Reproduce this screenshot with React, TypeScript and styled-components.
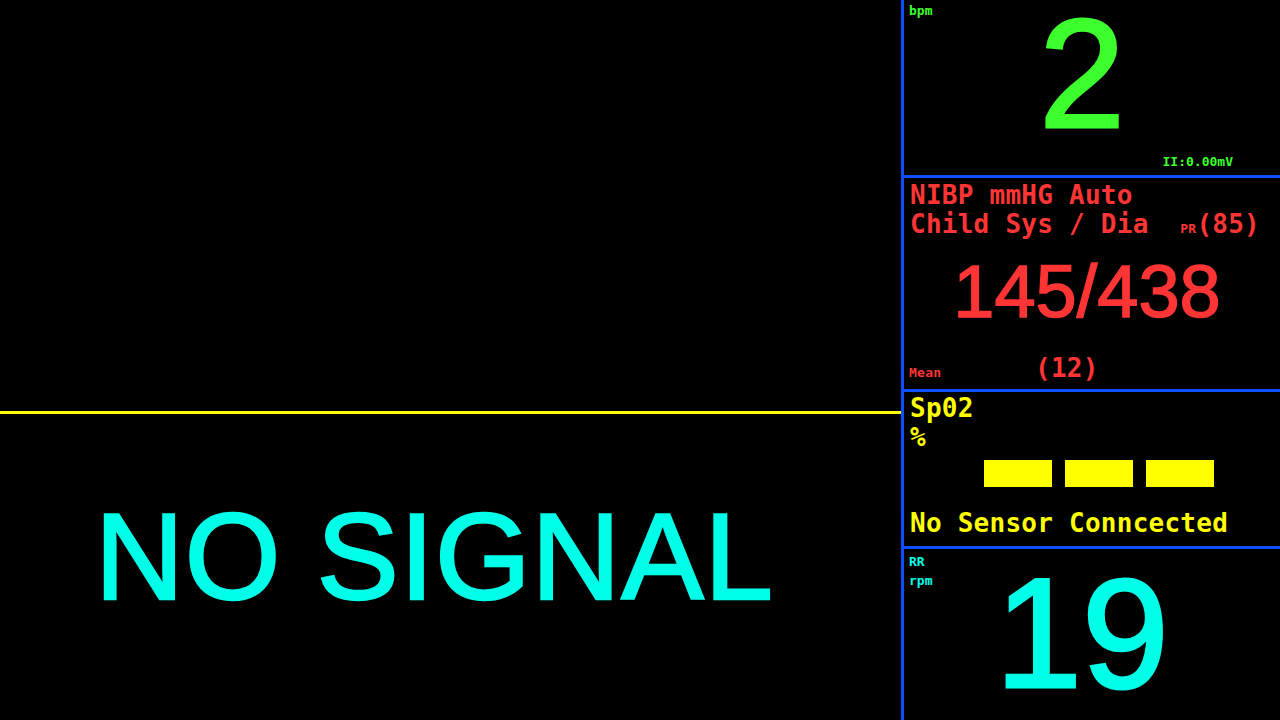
import React from "react";
import styled, { createGlobalStyle } from "styled-components";

const C = {
  green: "#3dff2e",
  red: "#ff3535",
  cyan: "#00ffe8",
  yellow: "#ffff00",
  blue: "#0f4fff",
};

const Global = createGlobalStyle`
  html, body { margin: 0; padding: 0; background: #000; }
  body { width: 1280px; height: 720px; overflow: hidden; }
  #root { width: 1280px; height: 720px; }
`;

const Screen = styled.div`
  display: flex;
  width: 1280px;
  height: 720px;
  background: #000;
`;

/* ---------- left: waveform area ---------- */
const WaveArea = styled.main`
  width: 901px;
  flex: none;
  display: flex;
  flex-direction: column;
`;

const WaveCanvas = styled.div`
  height: 411px;
  flex: none;
`;

const TraceLine = styled.div`
  height: 3px;
  flex: none;
  background: ${C.yellow};
`;

const NoSignal = styled.div`
  margin-top: 73px;
  padding-left: 95px;
  font-family: "Liberation Sans", Arial, sans-serif;
  font-size: 123px;
  line-height: 140px;
  letter-spacing: 1px;
  -webkit-text-stroke: 2.5px ${C.cyan};
  color: ${C.cyan};
  white-space: nowrap;
`;

/* ---------- right: parameter column ---------- */
const Panel = styled.aside`
  width: 379px;
  flex: none;
  box-sizing: border-box;
  border-left: 3px solid ${C.blue};
  display: flex;
  flex-direction: column;
`;

const Section = styled.section<{ $h: number; $last?: boolean }>`
  height: ${(p) => p.$h}px;
  flex: none;
  border-bottom: ${(p) => (p.$last ? "none" : `3px solid ${C.blue}`)};
`;

const StackSection = styled(Section)`
  display: grid;
  grid-template-areas: "stack";
  grid-template-columns: 1fr;
  grid-template-rows: 1fr;
  & > * {
    grid-area: stack;
  }
`;

const ColumnSection = styled(Section)<{ $pt: number }>`
  display: flex;
  flex-direction: column;
  padding-top: ${(p) => p.$pt}px;
  box-sizing: content-box;
  height: ${(p) => p.$h - p.$pt}px;
`;

const Small = styled.span<{ $color: string }>`
  font-family: "DejaVu Sans Mono", "Liberation Mono", monospace;
  font-weight: 700;
  font-size: 13px;
  line-height: 13px;
  color: ${(p) => p.$color};
  white-space: nowrap;
`;

const CornerLabel = styled(Small)`
  align-self: start;
  justify-self: start;
  margin: 4px 0 0 5px;
`;

const FootNote = styled(Small)`
  align-self: end;
  justify-self: end;
  margin: 0 47px 7px 0;
`;

const LabelStack = styled.div`
  align-self: start;
  justify-self: start;
  display: flex;
  flex-direction: column;
  gap: 6px;
  margin: 6px 0 0 5px;
`;

const Huge = styled.div<{ $color: string; $size: number; $top: number }>`
  align-self: start;
  justify-self: center;
  margin: ${(p) => p.$top}px 20px 0 0;
  font-family: "Liberation Sans", Arial, sans-serif;
  font-size: ${(p) => p.$size}px;
  line-height: 150px;
  -webkit-text-stroke: 3px ${(p) => p.$color};
  color: ${(p) => p.$color};
  white-space: nowrap;
`;

const MonoLine = styled.div<{ $color: string }>`
  font-family: "DejaVu Sans Mono", "Liberation Mono", monospace;
  font-weight: 700;
  font-size: 26px;
  letter-spacing: 0.25px;
  line-height: 29px;
  height: 29px;
  flex: none;
  padding-left: 6px;
  color: ${(p) => p.$color};
  white-space: pre;
`;

const MonoRow = styled(MonoLine)`
  display: flex;
  align-items: baseline;
  justify-content: space-between;
  padding-right: 20px;
`;

const PulseRate = styled.span`
  display: inline-flex;
  align-items: baseline;
`;

const Pressure = styled.div`
  flex: none;
  margin-top: 16px;
  padding-right: 10px;
  text-align: center;
  font-family: "Liberation Sans", Arial, sans-serif;
  font-size: 74px;
  line-height: 74px;
  -webkit-text-stroke: 1.5px ${C.red};
  color: ${C.red};
  white-space: nowrap;
`;

const MeanRow = styled(MonoLine)`
  margin-top: 25px;
  padding-left: 5px;
  display: flex;
  align-items: baseline;
`;

const MeanLabel = styled(Small)`
  width: 126px;
  flex: none;
`;

const Bars = styled.div`
  display: flex;
  gap: 13px;
  margin-top: 8px;
  padding-left: 80px;
  flex: none;
`;

const Bar = styled.div`
  width: 68px;
  height: 27px;
  background: ${C.yellow};
`;

const SensorMsg = styled(MonoLine)`
  margin-top: 22px;
`;

export default function App() {
  return (
    <>
      <Global />
      <Screen>
        <WaveArea>
          <WaveCanvas />
          <TraceLine />
          <NoSignal>NO SIGNAL</NoSignal>
        </WaveArea>

        <Panel>
          <StackSection $h={175}>
            <CornerLabel $color={C.green}>bpm</CornerLabel>
            <Huge $color={C.green} $size={154} $top={-1}>
              2
            </Huge>
            <FootNote $color={C.green}>II:0.00mV</FootNote>
          </StackSection>

          <ColumnSection $h={211} $pt={3}>
            <MonoLine $color={C.red}>NIBP mmHG Auto</MonoLine>
            <MonoRow $color={C.red}>
              <span>Child Sys / Dia</span>
              <PulseRate>
                <Small $color={C.red}>PR</Small>
                <span>(85)</span>
              </PulseRate>
            </MonoRow>
            <Pressure>145/438</Pressure>
            <MeanRow $color={C.red}>
              <MeanLabel $color={C.red}>Mean</MeanLabel>
              <span>(12)</span>
            </MeanRow>
          </ColumnSection>

          <ColumnSection $h={154} $pt={2}>
            <MonoLine $color={C.yellow}>Sp02</MonoLine>
            <MonoLine $color={C.yellow}>%</MonoLine>
            <Bars>
              <Bar />
              <Bar />
              <Bar />
            </Bars>
            <SensorMsg $color={C.yellow}>No Sensor Conncected</SensorMsg>
          </ColumnSection>

          <StackSection $h={171} $last>
            <LabelStack>
              <Small $color={C.cyan}>RR</Small>
              <Small $color={C.cyan}>rpm</Small>
            </LabelStack>
            <Huge $color={C.cyan} $size={156} $top={9}>
              19
            </Huge>
          </StackSection>
        </Panel>
      </Screen>
    </>
  );
}
